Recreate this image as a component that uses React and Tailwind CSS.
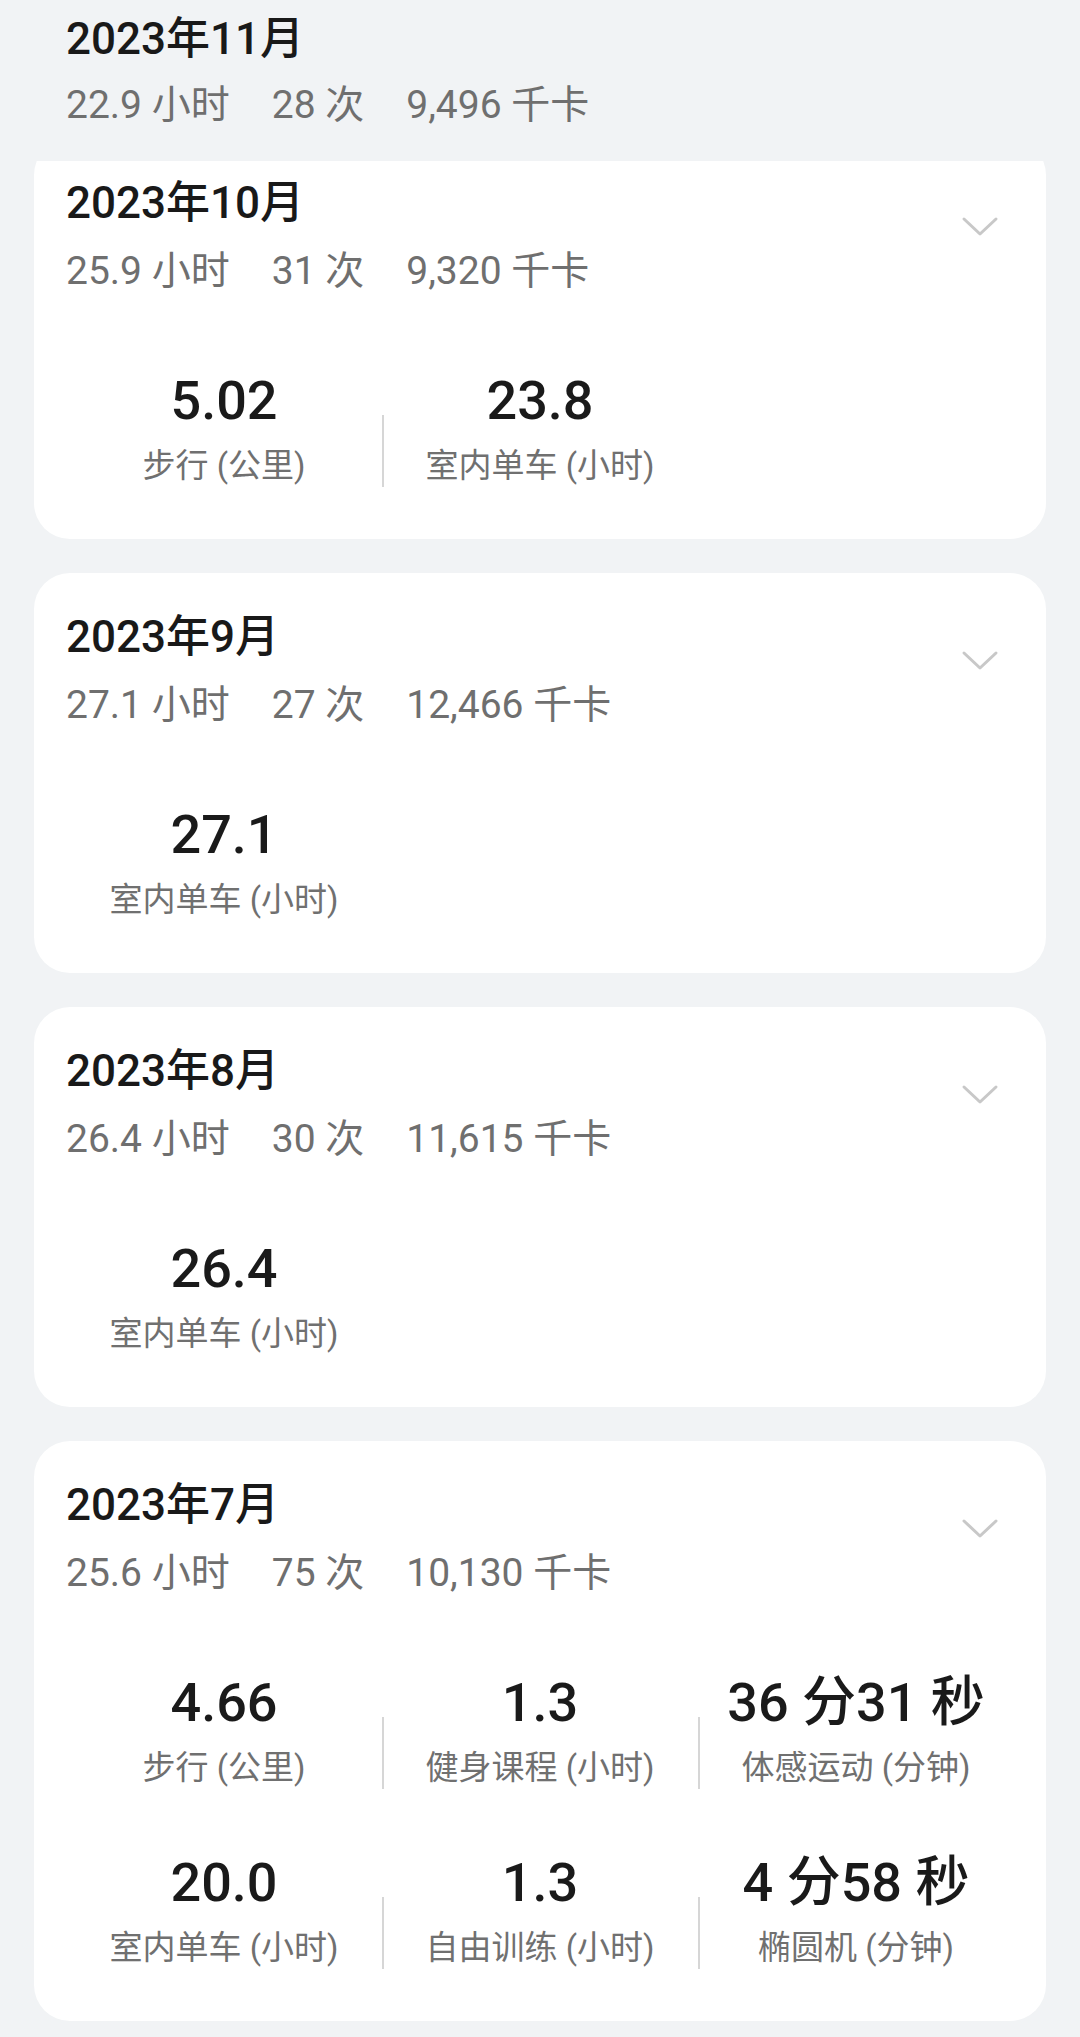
import React from "react";

const months = [
  {
    title: "2023年10月",
    summary: ["25.9 小时", "31 次", "9,320 千卡"],
    stats: [
      { value: "5.02", label: "步行 (公里)" },
      { value: "23.8", label: "室内单车 (小时)" },
    ],
  },
  {
    title: "2023年9月",
    summary: ["27.1 小时", "27 次", "12,466 千卡"],
    stats: [{ value: "27.1", label: "室内单车 (小时)" }],
  },
  {
    title: "2023年8月",
    summary: ["26.4 小时", "30 次", "11,615 千卡"],
    stats: [{ value: "26.4", label: "室内单车 (小时)" }],
  },
  {
    title: "2023年7月",
    summary: ["25.6 小时", "75 次", "10,130 千卡"],
    stats: [
      { value: "4.66", label: "步行 (公里)" },
      { value: "1.3", label: "健身课程 (小时)" },
      { value: "36 分31 秒", label: "体感运动 (分钟)" },
      { value: "20.0", label: "室内单车 (小时)" },
      { value: "1.3", label: "自由训练 (小时)" },
      { value: "4 分58 秒", label: "椭圆机 (分钟)" },
    ],
  },
];

function Summary({ items }) {
  return (
    <div className="flex gap-[42px] text-[39px] leading-none text-[#6f6f6f]">
      {items.map((s) => (
        <span key={s}>{s}</span>
      ))}
    </div>
  );
}

function Chevron() {
  return (
    <svg width="38" height="22" viewBox="0 0 38 22" fill="none">
      <path
        d="M3 3 L19 18 L35 3"
        stroke="#c8c8c8"
        strokeWidth="3"
        strokeLinecap="round"
        strokeLinejoin="round"
      />
    </svg>
  );
}

function StatCell({ value, label, index }) {
  return (
    <div className="relative flex flex-col items-center">
      {index % 3 !== 0 && (
        <div className="absolute left-0 top-[41px] h-[72px] w-[2px] bg-[#d6d6d6]" />
      )}
      <div className="text-[54px] leading-none font-medium text-[#1a1a1a]">
        {value}
      </div>
      <div className="mt-[21px] text-[33px] leading-none text-[#707070]">
        {label}
      </div>
    </div>
  );
}

function MonthCard({ month }) {
  return (
    <div className="rounded-[36px] bg-white px-[32px] pt-[42px] pb-[57px]">
      <div className="flex items-start justify-between">
        <div>
          <div className="text-[44px] leading-none font-medium text-[#191919]">
            {month.title}
          </div>
          <div className="mt-[27px]">
            <Summary items={month.summary} />
          </div>
        </div>
        <div className="mt-[35px] mr-[15px]">
          <Chevron />
        </div>
      </div>
      <div className="mt-[83px] grid grid-cols-3 gap-y-[72px]">
        {month.stats.map((s, i) => (
          <StatCell key={i} index={i} value={s.value} label={s.label} />
        ))}
      </div>
    </div>
  );
}

export default function App() {
  return (
    <div
      className="relative h-[2037px] w-[1080px] overflow-hidden bg-[#f1f3f5]"
      style={{ fontFamily: 'Roboto, "Noto Sans CJK SC", sans-serif' }}
    >
      <div className="absolute left-0 right-0 top-0 z-10 h-[161px] bg-[#f1f3f5] px-[66px] pt-[17px]">
        <div className="text-[44px] leading-none font-medium text-[#191919]">
          2023年11月
        </div>
        <div className="mt-[25px]">
          <Summary items={["22.9 小时", "28 次", "9,496 千卡"]} />
        </div>
      </div>
      <div className="flex flex-col gap-[34px] px-[34px] pt-[139px]">
        {months.map((m) => (
          <MonthCard key={m.title} month={m} />
        ))}
      </div>
    </div>
  );
}
